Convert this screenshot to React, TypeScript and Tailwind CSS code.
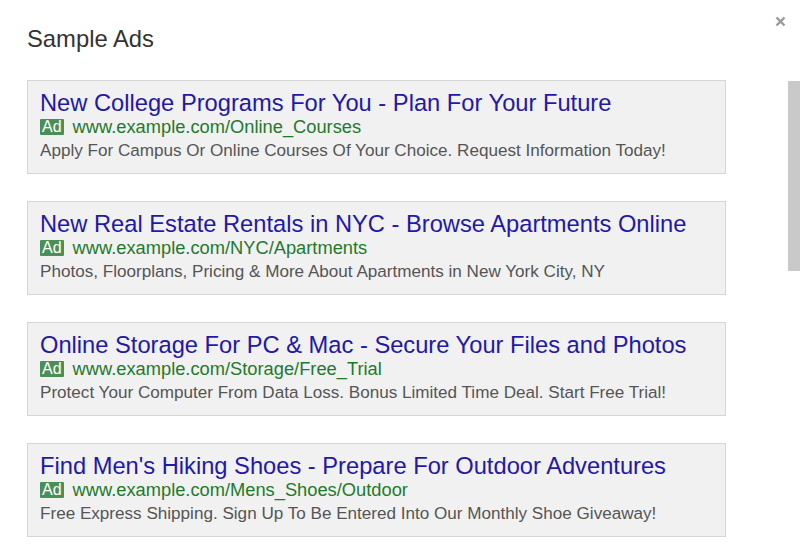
const ads = [
  {
    title: "New College Programs For You - Plan For Your Future",
    url: "www.example.com/Online_Courses",
    desc: "Apply For Campus Or Online Courses Of Your Choice. Request Information Today!",
  },
  {
    title: "New Real Estate Rentals in NYC - Browse Apartments Online",
    url: "www.example.com/NYC/Apartments",
    desc: "Photos, Floorplans, Pricing & More About Apartments in New York City, NY",
  },
  {
    title: "Online Storage For PC & Mac - Secure Your Files and Photos",
    url: "www.example.com/Storage/Free_Trial",
    desc: "Protect Your Computer From Data Loss. Bonus Limited Time Deal. Start Free Trial!",
  },
  {
    title: "Find Men's Hiking Shoes - Prepare For Outdoor Adventures",
    url: "www.example.com/Mens_Shoes/Outdoor",
    desc: "Free Express Shipping. Sign Up To Be Entered Into Our Monthly Shoe Giveaway!",
  },
];

const App = () => {
  return (
    <div className="w-[800px] h-[548px] bg-white overflow-hidden font-['Liberation_Sans',Arial,sans-serif]">
      <div className="flex justify-between items-start pl-[27px] pr-[14px] pt-[26px]">
        <h1 className="text-[23.8px] leading-[26px] text-[#333]">Sample Ads</h1>
        <svg width="11" height="11" viewBox="0 0 11 11" className="mt-[-10px]">
          <path d="M1.5 1.5 L9.5 9.5 M9.5 1.5 L1.5 9.5" stroke="#9a9a9a" strokeWidth="2.4" />
        </svg>
      </div>
      <div className="flex mt-[28px]">
        <div className="flex flex-col gap-[27px] ml-[27px] w-[699px]">
          {ads.map((ad, idx) => (
            <div
              key={idx}
              className="bg-[#f1f1f1] border border-[#d6d6d6] pl-[12px] pt-[10px] pb-[10px]"
            >
              <div className="text-[23.7px] leading-[24px] text-[#2318a8] whitespace-nowrap">{ad.title}</div>
              <div className="flex items-center text-[18.3px] leading-[23px] text-[#1f7a2c] whitespace-nowrap">
                <span className="bg-[#4a8f57] text-white text-[16px] leading-[16px] px-[2px] mr-[9px] rounded-[1px]">Ad</span>
                {ad.url}
              </div>
              <div className="text-[17.1px] leading-[25px] text-[#555] whitespace-nowrap">{ad.desc}</div>
            </div>
          ))}
        </div>
        <div className="ml-auto w-[12px] pt-[1px]">
          <div className="h-[190px] bg-[#c9c9c9]"></div>
        </div>
      </div>
    </div>
  );
};

export default App;
